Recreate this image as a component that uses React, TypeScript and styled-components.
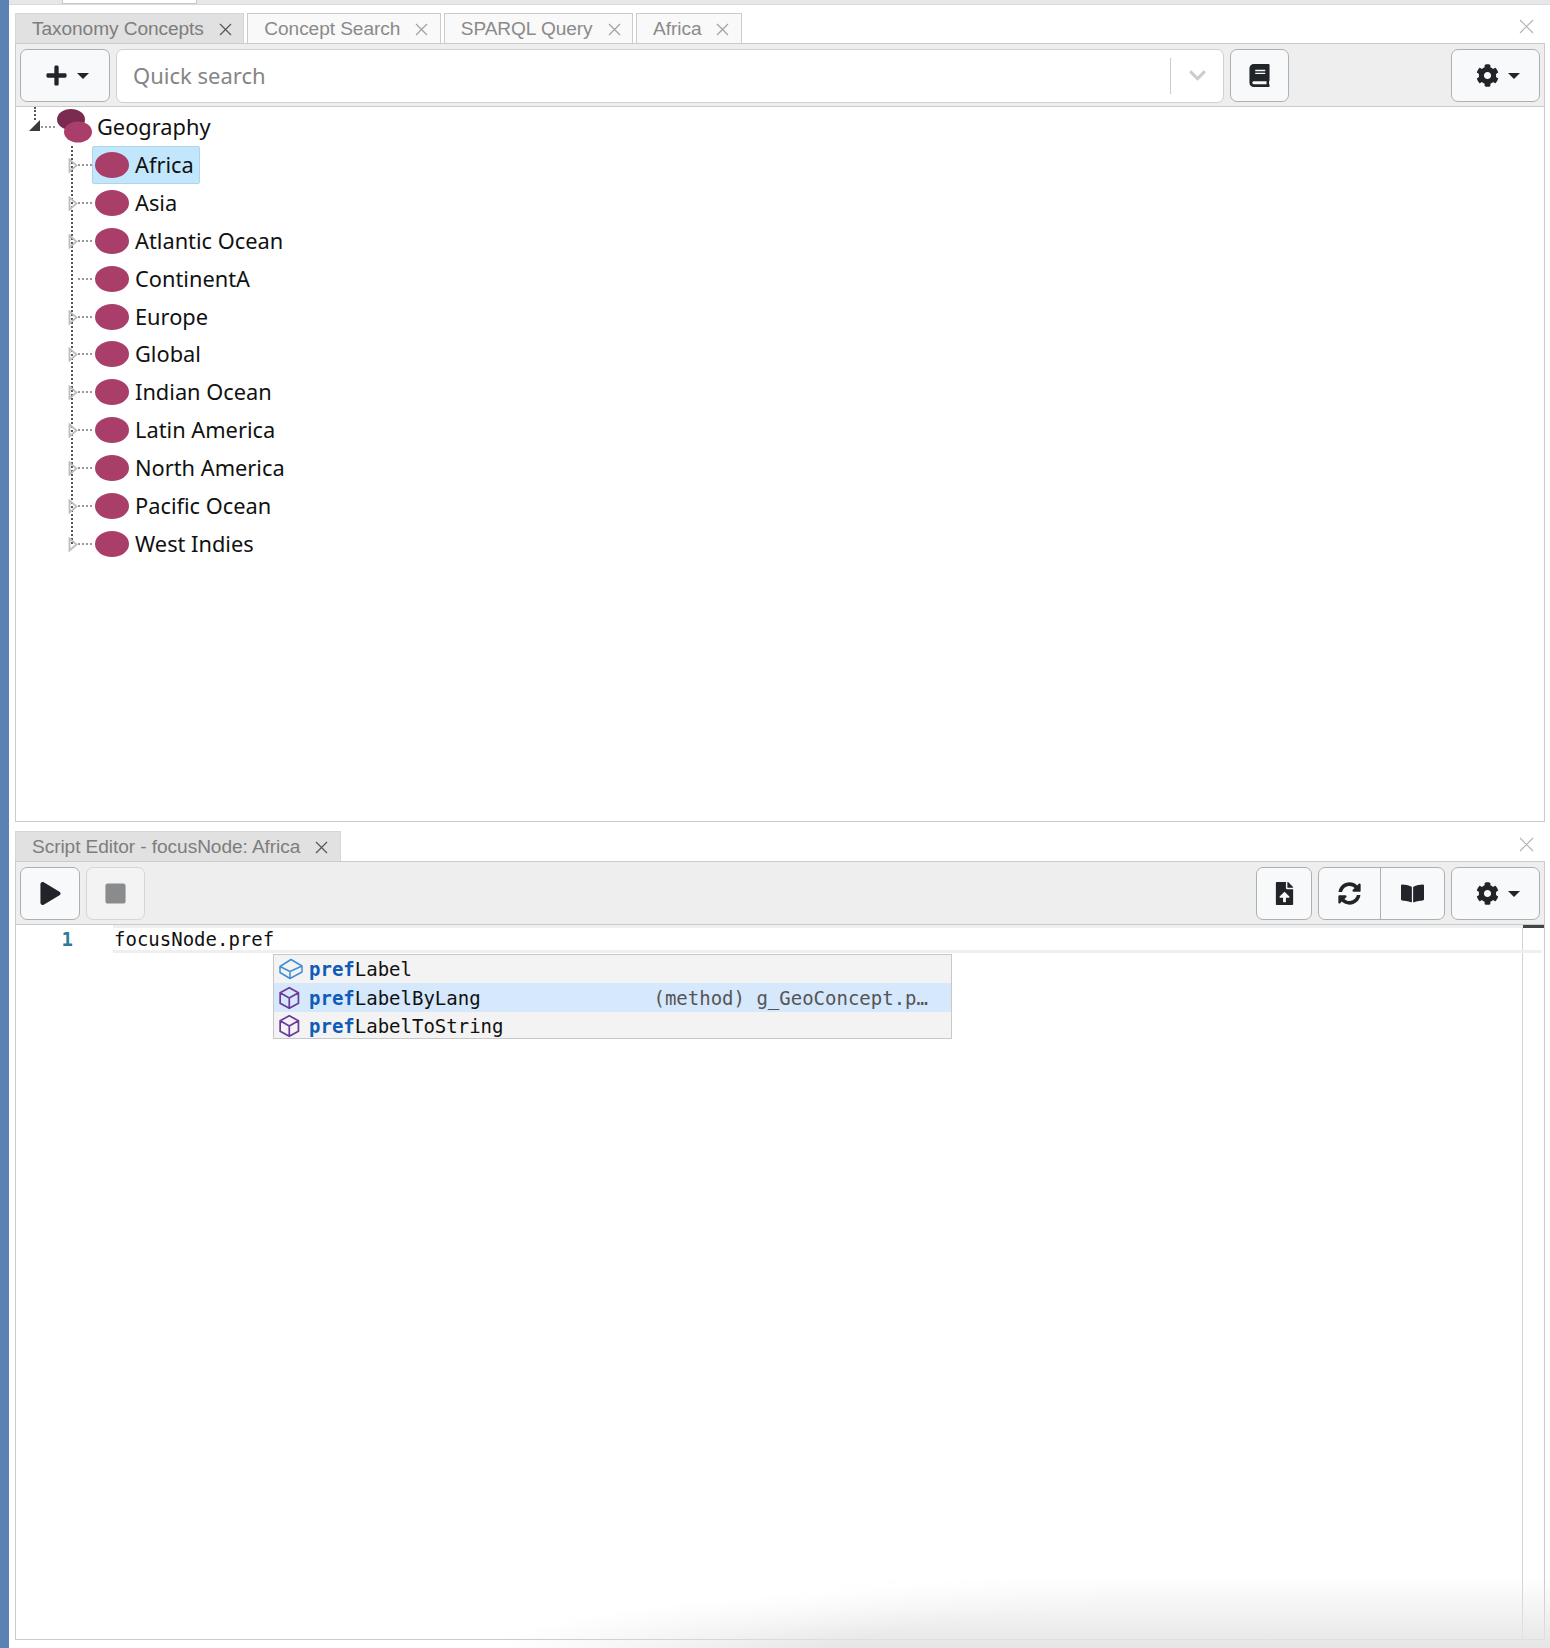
import React from "react";
import styled, { createGlobalStyle } from "styled-components";
import { FaPlus, FaBook, FaCog, FaPlay, FaStop, FaFileUpload, FaSyncAlt, FaBookOpen, FaChevronDown } from "react-icons/fa";

const Global = createGlobalStyle`
  html, body { margin: 0; padding: 0; background: #fff; }
  body { width: 1550px; height: 1648px; overflow: hidden; font-family: "Liberation Sans", Arial, sans-serif; }
`;

const Page = styled.div`
  position: relative;
  display: flex;
  width: 1550px;
  height: 1648px;
  overflow: hidden;
  background: #fff;
`;
const SideBar = styled.div`
  flex: 0 0 9px;
  background: #5c82b5;
`;
const Main = styled.div`
  flex: 1;
  display: flex;
  flex-direction: column;
  min-width: 0;
`;
const TopStrip = styled.div`
  flex: 0 0 5px;
  background: #e7e7e9;
  border-bottom: 1px solid #dcdce0;
  box-sizing: border-box;
  padding-left: 53px;
`;
const TopTab = styled.div`
  width: 135px;
  height: 4px;
  background: #fff;
  border: 1px solid #c9c9c9;
  border-top: 0;
  box-sizing: border-box;
`;
const Panels = styled.div`
  flex: 1;
  display: flex;
  flex-direction: column;
  gap: 9px;
  padding: 8px 5px 8px 6px;
  min-height: 0;
`;
const Panel = styled.section`
  flex: 1 1 0;
  display: flex;
  flex-direction: column;
  min-height: 0;
`;
const TabStrip = styled.div`
  position: relative;
  flex: 0 0 30px;
  display: flex;
  gap: 3px;
`;
const Tab = styled.div<{ $active?: boolean }>`
  box-sizing: border-box;
  height: 30px;
  display: flex;
  align-items: center;
  padding: 1px 11.5px 0 16px;
  gap: 15px;
  font-size: 19.1px;
  letter-spacing: -0.07px;
  white-space: nowrap;
  color: ${(p) => (p.$active ? "#7d7d7d" : "#8a8a8a")};
  background: ${(p) => (p.$active ? "#e1e1e1" : "#f9f9f9")};
  border: 1px solid ${(p) => (p.$active ? "#d6d6d6" : "#cbcbcb")};
  border-bottom: 0;
`;
const CloseBtn = styled.svg<{ $dark?: boolean }>`
  flex: none;
  width: 13px;
  height: 13px;
  stroke: ${(p) => (p.$dark ? "#555" : "#a0a0a0")};
  stroke-width: 1.2;
  fill: none;
`;
const PanelClose = styled.svg`
  position: absolute;
  right: 11px;
  top: 6px;
  width: 15px;
  height: 15px;
  stroke: #b4b4b4;
  stroke-width: 1.2;
  fill: none;
`;
const Toolbar = styled.div`
  flex: 0 0 64px;
  box-sizing: border-box;
  display: flex;
  align-items: center;
  gap: 6px;
  padding: 1px 4px 0 4px;
  background: #eeeeee;
  border: 1px solid #cbcbcb;
`;
const ToolButton = styled.div<{ $w: number; $disabled?: boolean; $caret?: boolean }>`
  flex: none;
  box-sizing: border-box;
  width: ${(p) => p.$w}px;
  height: 53px;
  display: flex;
  align-items: center;
  justify-content: center;
  gap: 9px;
  padding-left: ${(p) => (p.$caret ? "4px" : "0")};
  font-size: 23px;
  color: #212529;
  background: ${(p) => (p.$disabled ? "#f3f3f4" : "#f8f9fa")};
  border: 1px solid ${(p) => (p.$disabled ? "#d6d6d6" : "#adb0b3")};
  border-radius: 7px;
  & > svg { opacity: ${(p) => (p.$disabled ? 0.5 : 1)}; }
`;
const Caret = styled.span`
  width: 0;
  height: 0;
  border-left: 6px solid transparent;
  border-right: 6px solid transparent;
  border-top: 6px solid #212529;
`;
const Search = styled.div`
  flex: 0 0 1108px;
  box-sizing: border-box;
  height: 54px;
  display: flex;
  align-items: center;
  padding-left: 16px;
  background: #fff;
  border: 1px solid #d0d0d0;
  border-radius: 7px;
`;
const SearchText = styled.span`
  flex: 1;
  padding-bottom: 2px;
  font-family: "Noto Sans", "Open Sans", sans-serif;
  font-size: 22px;
  color: #858585;
`;
const SearchDrop = styled.div`
  flex: 0 0 52px;
  height: 36px;
  display: flex;
  align-items: center;
  justify-content: center;
  border-left: 1px solid #cccccc;
  color: #cccccc;
  font-size: 19px;
`;
const Spacer = styled.div`
  flex: 1;
`;
const Group = styled.div`
  flex: none;
  display: flex;
  box-sizing: border-box;
  height: 53px;
  background: #f8f9fa;
  border: 1px solid #adb0b3;
  border-radius: 7px;
  color: #212529;
  font-size: 23px;
`;
const GroupItem = styled.div<{ $w: number; $divider?: boolean }>`
  width: ${(p) => p.$w}px;
  display: flex;
  align-items: center;
  justify-content: center;
  border-right: ${(p) => (p.$divider ? "1px solid #adb0b3" : "0")};
`;
const TreeBody = styled.div`
  flex: 1;
  position: relative;
  box-sizing: border-box;
  padding: 1px 0 0 0;
  border: 1px solid #cbcbcb;
  border-top: 0;
  min-height: 0;
`;
const RootRow = styled.div`
  position: relative;
  box-sizing: border-box;
  height: 38px;
  display: flex;
  align-items: center;
  padding: 0 0 1px 81px;
`;
const RootStem = styled.i`
  position: absolute;
  left: 18px;
  top: -1px;
  height: 13px;
  border-left: 2px dotted #555;
`;
const RootArrow = styled.svg`
  position: absolute;
  left: 13px;
  top: 12px;
  width: 11px;
  height: 11px;
  fill: #3a3a3a;
`;
const RootDash = styled.i`
  position: absolute;
  left: 25px;
  top: 18px;
  width: 14px;
  border-top: 2px dotted #999;
`;
const RootIcon = styled.svg`
  position: absolute;
  left: 41px;
  top: 0;
  width: 36px;
  height: 36px;
`;
const Children = styled.ul`
  position: relative;
  list-style: none;
  margin: 0;
  padding: 0;
  &::before {
    content: "";
    position: absolute;
    left: 55px;
    top: 0;
    bottom: 19px;
    border-left: 2px dotted #555;
  }
`;
const Row = styled.li`
  position: relative;
  height: 37.9px;
  display: flex;
  align-items: center;
  padding-left: 76px;
`;
const Expander = styled.svg`
  position: absolute;
  left: 52px;
  top: 12px;
  width: 10px;
  height: 15px;
  stroke: #bdbdbd;
  stroke-width: 1.8;
  fill: none;
`;
const Dash = styled.i`
  position: absolute;
  left: 62px;
  top: 18px;
  width: 14px;
  border-top: 2px dotted #999;
`;
const Anchor = styled.div<{ $selected?: boolean }>`
  box-sizing: border-box;
  height: 38px;
  display: flex;
  align-items: center;
  gap: 6px;
  padding: 0 5px 0 2px;
  background: ${(p) => (p.$selected ? "#c2e7fd" : "transparent")};
  border: 1px solid ${(p) => (p.$selected ? "#acd6ec" : "transparent")};
  border-radius: 2px;
`;
const Bubble = styled.span`
  flex: none;
  width: 34px;
  height: 26px;
  border-radius: 50%;
  background: #a83e69;
`;
const Label = styled.span`
  padding-bottom: 1px;
  font-family: "Noto Sans", "Open Sans", sans-serif;
  font-size: 21.8px;
  color: #111;
  white-space: nowrap;
`;
const EditorBody = styled.div`
  flex: 1;
  position: relative;
  display: flex;
  box-sizing: border-box;
  border: 1px solid #cbcbcb;
  border-top: 0;
  min-height: 0;
  font-family: "DejaVu Sans Mono", "Liberation Mono", monospace;
  font-size: 19px;
`;
const Gutter = styled.div`
  flex: 0 0 97px;
  box-sizing: border-box;
  padding: 2px 40px 0 0;
  height: 28px;
  line-height: 24px;
  text-align: right;
  font-weight: 700;
  color: #2f7a96;
`;
const Code = styled.div`
  flex: 1;
  border-right: 1px solid #d4d4d4;
`;
const CurrentLine = styled.div`
  box-sizing: border-box;
  height: 28px;
  padding: 0 0 0 1px;
  line-height: 22px;
  color: #111;
  border-top: 3px solid #efefef;
  border-bottom: 3px solid #efefef;
  margin-right: -20px;
  white-space: pre;
`;
const Ruler = styled.div`
  flex: 0 0 21px;
  position: relative;
`;
const RulerMark = styled.div`
  height: 3px;
  background: #444;
`;
const Suggest = styled.div`
  position: absolute;
  left: 257px;
  top: 29px;
  width: 679px;
  height: 85px;
  overflow: hidden;
  box-sizing: border-box;
  background: #f3f3f3;
  border: 1px solid #c8c8c8;
  color: #111;
`;
const SuggestRow = styled.div<{ $selected?: boolean }>`
  height: ${(p) => (p.$selected ? "29px" : "28px")};
  display: flex;
  align-items: center;
  padding: 0 23px 0 5px;
  gap: 6px;
  background: ${(p) => (p.$selected ? "#d6e8fb" : "transparent")};
  white-space: pre;
`;
const CubeIcon = styled.svg<{ $color: string }>`
  flex: none;
  width: 24px;
  height: 24px;
  stroke: ${(p) => p.$color};
  stroke-width: 1.5;
  fill: none;
  stroke-linejoin: round;
`;
const Match = styled.b`
  color: #0f5cb8;
  font-weight: 700;
`;
const Detail = styled.span`
  margin-left: auto;
  color: #555;
`;
const BottomFade = styled.div`
  position: absolute;
  left: 0;
  right: 0;
  bottom: 0;
  height: 70px;
  background: linear-gradient(to bottom, rgba(228, 228, 228, 0), rgba(228, 228, 228, 0.95));
  -webkit-mask-image: radial-gradient(ellipse 700px 100% at 1200px 100%, #000 50%, transparent 100%), linear-gradient(to right, transparent 800px, #000 1100px);
  mask-image: radial-gradient(ellipse 700px 100% at 1200px 100%, #000 50%, transparent 100%), linear-gradient(to right, transparent 800px, #000 1100px);
  pointer-events: none;
`;

const X = ({ dark }: { dark?: boolean }) => (
  <CloseBtn $dark={dark} viewBox="0 0 13 13"><path d="M1 1l11 11M12 1L1 12" /></CloseBtn>
);
const BigX = () => (
  <PanelClose viewBox="0 0 15 15"><path d="M1 1l13 13M14 1L1 14" /></PanelClose>
);

const nodes: { name: string; leaf?: boolean; selected?: boolean }[] = [
  { name: "Africa", selected: true },
  { name: "Asia" },
  { name: "Atlantic Ocean" },
  { name: "ContinentA", leaf: true },
  { name: "Europe" },
  { name: "Global" },
  { name: "Indian Ocean" },
  { name: "Latin America" },
  { name: "North America" },
  { name: "Pacific Ocean" },
  { name: "West Indies" },
];

const Method = () => (
  <CubeIcon $color="#6b3a9b" viewBox="3 1.500 21 21">
    <path d="M12 3l8 4.500v9L12 21l-8-4.500v-9L12 3zM4 7.500l8 4.500 8-4.500M12 12v9" />
  </CubeIcon>
);
const Field = () => (
  <CubeIcon $color="#3f8fd6" viewBox="0 0 24 24">
    <path d="M12 2.500L23 9v6l-12 6.500L1 15.500V9.500zM1 9.500l10 5 12-5.500M11 14.500v7" />
  </CubeIcon>
);

export default function App() {
  return (
    <Page>
      <Global />
      <SideBar />
      <Main>
        <TopStrip><TopTab /></TopStrip>
        <Panels>
          <Panel>
            <TabStrip>
              <Tab $active>Taxonomy Concepts <X dark /></Tab>
              <Tab>Concept Search <X /></Tab>
              <Tab>SPARQL Query <X /></Tab>
              <Tab>Africa <X /></Tab>
              <BigX />
            </TabStrip>
            <Toolbar>
              <ToolButton $w={90} $caret><FaPlus /><Caret /></ToolButton>
              <Search>
                <SearchText>Quick search</SearchText>
                <SearchDrop><FaChevronDown /></SearchDrop>
              </Search>
              <ToolButton $w={59}><FaBook /></ToolButton>
              <Spacer />
              <ToolButton $w={89} $caret><FaCog /><Caret /></ToolButton>
            </Toolbar>
            <TreeBody>
              <RootRow>
                <RootStem />
                <RootArrow viewBox="0 0 11 11"><path d="M11 0v11H0z" /></RootArrow>
                <RootDash />
                <RootIcon viewBox="0 0 36 36">
                  <ellipse cx="14" cy="11.500" rx="14" ry="10.500" fill="#7c2b50" />
                  <ellipse cx="21" cy="24" rx="14" ry="10.500" fill="#a83e69" />
                </RootIcon>
                <Label>Geography</Label>
              </RootRow>
              <Children>
                {nodes.map((n) => (
                  <Row key={n.name}>
                    {!n.leaf && (
                      <Expander viewBox="0 0 10 15"><path d="M1.500 1.500l7 6-7 6z" /></Expander>
                    )}
                    <Dash />
                    <Anchor $selected={n.selected}>
                      <Bubble />
                      <Label>{n.name}</Label>
                    </Anchor>
                  </Row>
                ))}
              </Children>
            </TreeBody>
          </Panel>
          <Panel>
            <TabStrip>
              <Tab $active>Script Editor - focusNode: Africa <X dark /></Tab>
              <BigX />
            </TabStrip>
            <Toolbar>
              <ToolButton $w={60}><FaPlay /></ToolButton>
              <ToolButton $w={59} $disabled><FaStop /></ToolButton>
              <Spacer />
              <ToolButton $w={56}><FaFileUpload /></ToolButton>
              <Group>
                <GroupItem $w={61} $divider><FaSyncAlt /></GroupItem>
                <GroupItem $w={63}><FaBookOpen /></GroupItem>
              </Group>
              <ToolButton $w={89} $caret><FaCog /><Caret /></ToolButton>
            </Toolbar>
            <EditorBody>
              <Gutter>1</Gutter>
              <Code>
                <CurrentLine>focusNode.pref</CurrentLine>
              </Code>
              <Ruler><RulerMark /></Ruler>
              <Suggest>
                <SuggestRow><Field /><span><Match>pref</Match>Label</span></SuggestRow>
                <SuggestRow $selected>
                  <Method />
                  <span><Match>pref</Match>LabelByLang</span>
                  <Detail>(method) g_GeoConcept.p…</Detail>
                </SuggestRow>
                <SuggestRow><Method /><span><Match>pref</Match>LabelToString</span></SuggestRow>
              </Suggest>
            </EditorBody>
          </Panel>
        </Panels>
      </Main>
      <BottomFade />
    </Page>
  );
}
